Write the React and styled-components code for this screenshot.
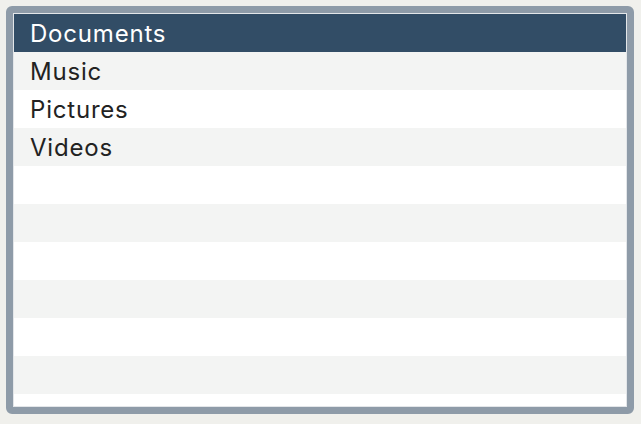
import React from "react";
import styled, { createGlobalStyle } from "styled-components";

const Global = createGlobalStyle`
  html, body { margin: 0; padding: 0; background: #f0f0ec; }
  body { font-family: Inter, "Liberation Sans", sans-serif; }
`;

const Page = styled.div`
  padding: 6px 7px 10px 6px;
`;

const Frame = styled.div`
  box-sizing: border-box;
  height: 408px;
  border: 7px solid #8e9ba8;
  border-radius: 6px;
  overflow: hidden;
`;

const List = styled.ul`
  box-sizing: border-box;
  margin: 0;
  padding: 0;
  list-style: none;
  height: 100%;
  border: 1px solid #e3e6e9;
  background: #ffffff;
  overflow: hidden;
`;

const Row = styled.li`
  height: 38px;
  display: flex;
  align-items: center;
  padding-left: 16px;
  font-size: 24px;
  letter-spacing: 0.8px;
  color: ${(p) => (p.$selected ? "#ffffff" : "#222222")};
  background: ${(p) =>
    p.$selected ? "#324d66" : p.$odd ? "#f3f4f3" : "#ffffff"};
`;

const items = ["Documents", "Music", "Pictures", "Videos", "", "", "", "", "", "", ""];

export default function App() {
  return (
    <>
      <Global />
      <Page>
        <Frame>
          <List>
            {items.map((t, i) => (
              <Row key={i} $selected={i === 0} $odd={i % 2 === 1}>
                {t}
              </Row>
            ))}
          </List>
        </Frame>
      </Page>
    </>
  );
}
